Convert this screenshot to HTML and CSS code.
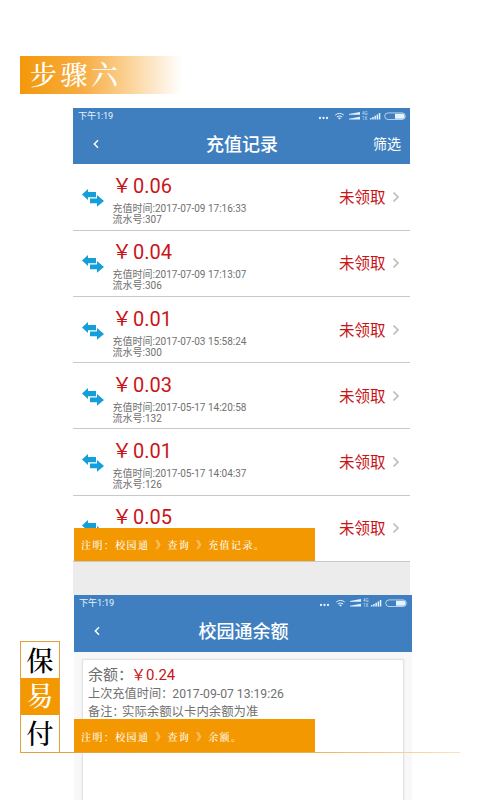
FILE: index.html
```html
<!DOCTYPE html>
<html lang="zh-CN">
<head>
<meta charset="utf-8">
<title>保易付</title>
<link rel="stylesheet" href="styles.css">
</head>
<body>
<svg width="0" height="0" class="defs">
  <symbol id="swap" viewBox="0 0 22 18"><path d="M0 5.500 6 0v3h8v5.200H6V11zM8 9.600h7V6l7 6-7 5.700V14.300H8z"/></symbol>
  <symbol id="right" viewBox="0 0 8 12"><path d="M1.500 1.500 6 6l-4.500 4.500" fill="none" stroke="#bcbcbc" stroke-width="1.700"/></symbol>
  <symbol id="back" viewBox="0 0 8 10"><path d="M6 1.300 2.300 5 6 8.700" fill="none" stroke="#fff" stroke-width="1.400"/></symbol>
  <symbol id="dots" viewBox="0 0 43 12">
    <g fill="#e5f2ff"><circle cx="2" cy="8" r="1.150"/><circle cx="5.500" cy="8" r="1.150"/><circle cx="9" cy="8" r="1.150"/>
    <path d="M31 4.700V3.900l11-2v2.800zM31 9.600V8.800l11-2v2.800z"/><path d="m21.500 9.500-1.500-1.600q1.500-1 3 0z"/></g>
    <path d="M17.300 5q4.200-3.200 8.400 0M18.800 6.900q2.700-2 5.400 0" fill="none" stroke="#e5f2ff"/>
  </symbol>
  <symbol id="power" viewBox="0 0 38 12">
    <path d="M1 9.500V8h1.500v1.500zm2.200 0V7h1.500v2.500zm2.200 0V5.800h1.500v3.700zm2.200 0V4.400h1.500v5.100zm2.200 0V3h1.500v6.500zM26 3.700h7.500q2.200 0 2.200 2.500t-2.200 2.500H26z" fill="#e5f2ff"/>
    <rect x="15.700" y="2.900" width="20.600" height="6.600" rx="3.300" fill="none" stroke="#e5f2ff" stroke-width=".7"/>
  </symbol>
</svg>
<h1 class="step">步骤六</h1>

<section class="phone records">
  <header class="bar">
    <div class="status"><span>下午1:19</span><svg width="43" height="12"><use href="#dots"/></svg><span class="net">4G<br>1X</span><svg width="38" height="12"><use href="#power"/></svg></div>
    <div class="nav"><svg width="8" height="10"><use href="#back"/></svg><b>充值记录</b><span>筛选</span></div>
  </header>
  <div class="list">
    <div class="row"><svg class="swap"><use href="#swap"/></svg><div class="info"><p class="amount"><i>￥</i>0.06</p><p>充值时间:2017-07-09 17:16:33</p><p>流水号:307</p></div><span class="state">未领取</span><svg class="right"><use href="#right"/></svg></div>
    <div class="row"><svg class="swap"><use href="#swap"/></svg><div class="info"><p class="amount"><i>￥</i>0.04</p><p>充值时间:2017-07-09 17:13:07</p><p>流水号:306</p></div><span class="state">未领取</span><svg class="right"><use href="#right"/></svg></div>
    <div class="row"><svg class="swap"><use href="#swap"/></svg><div class="info"><p class="amount"><i>￥</i>0.01</p><p>充值时间:2017-07-03 15:58:24</p><p>流水号:300</p></div><span class="state">未领取</span><svg class="right"><use href="#right"/></svg></div>
    <div class="row"><svg class="swap"><use href="#swap"/></svg><div class="info"><p class="amount"><i>￥</i>0.03</p><p>充值时间:2017-05-17 14:20:58</p><p>流水号:132</p></div><span class="state">未领取</span><svg class="right"><use href="#right"/></svg></div>
    <div class="row"><svg class="swap"><use href="#swap"/></svg><div class="info"><p class="amount"><i>￥</i>0.01</p><p>充值时间:2017-05-17 14:04:37</p><p>流水号:126</p></div><span class="state">未领取</span><svg class="right"><use href="#right"/></svg></div>
    <div class="row"><svg class="swap"><use href="#swap"/></svg><div class="info"><p class="amount"><i>￥</i>0.05</p></div><span class="state">未领取</span><svg class="right"><use href="#right"/></svg></div>
  </div>
  <div class="note"><span>注明：校园通</span><em>》</em><span>查询</span><em>》</em><span>充值记录。</span></div>
</section>

<section class="phone balance">
  <header class="bar">
    <div class="status"><span>下午1:19</span><svg width="43" height="12"><use href="#dots"/></svg><span class="net">4G<br>1X</span><svg width="38" height="12"><use href="#power"/></svg></div>
    <div class="nav"><svg width="8" height="10"><use href="#back"/></svg><b>校园通余额</b><span></span></div>
  </header>
  <div class="card">
    <p class="total">余额：<strong><i>￥</i>0.24</strong></p>
    <p>上次充值时间：<span>2017-09-07 13:19:26</span></p>
    <p>备注：<span class="remark">实际余额以卡内余额为准</span></p>
  </div>
  <div class="note"><span>注明：校园通</span><em>》</em><span>查询</span><em>》</em><span>余额。</span></div>
</section>

<aside class="brand"><span>保</span><span class="fill">易</span><span>付</span></aside>
<div class="rule"></div>
</body>
</html>
```
FILE: styles.css
```css
* { box-sizing: border-box; }
body { margin: 0; width: 480px; height: 800px; overflow: hidden; position: relative; background: #fff; font-family: Roboto, "Noto Sans CJK SC", sans-serif; }
p, h1 { margin: 0; }
i, em { font-style: normal; }
svg { display: block; flex: none; }
.defs { position: absolute; }
.step { margin: 56px 0 0 20px; width: 165px; height: 38px; padding-left: 10px; background: linear-gradient(90deg, #f3980b, #f7ad42 38%, #fbd194 65%, #fff 98%); color: #fff; font: 500 27px/36px "Noto Serif CJK SC", "Noto Sans CJK SC", serif; letter-spacing: 3.5px; }
.phone { position: relative; }
.records { width: 337px; height: 487px; margin: 14px 0 0 73px; background: #ececec; }
.bar { height: 56px; background: #407fbf; color: #fff; }
.status { display: flex; height: 16px; padding: 2px 3px 0 5px; font-size: 9.2px; line-height: 12px; color: #e5f2ff; letter-spacing: -.2px; }
.status span:first-child { margin-right: auto; }
.status .net { width: 8px; padding: 1px 0 0 1px; font-size: 4.5px; line-height: 5px; letter-spacing: 0; color: #c8dff5; }
.nav { display: grid; grid-template-columns: 60px 1fr 60px; align-items: center; height: 40px; text-align: center; }
.nav svg { margin-left: 19px; }
.nav b { padding: 1px 0 0 1px; font-size: 18px; line-height: 24px; font-weight: 500; }
.nav span { font-size: 14px; line-height: 20px; text-align: right; padding-right: 9px; }
.list { padding-top: .6px; background: #fff; }
.row { display: flex; height: 66.2px; border-bottom: 1px solid #c9c9c9; padding-left: 9px; }
.swap { width: 22px; height: 18px; margin-top: 24.6px; fill: #159fda; }
.info { width: 235px; padding: 11.6px 0 0 9px; font-size: 10px; line-height: 11px; color: #707070; white-space: nowrap; }
.info p:not(.amount) { margin-left: -.5px; }
.amount { height: 20px; margin-bottom: 7px; color: #c91518; font-size: 20px; line-height: 20px; }
.amount i { display: inline-block; width: 20px; font-size: 20px; line-height: 20px; text-indent: -1px; }
.state { width: 53px; margin-top: 23.6px; font-size: 15.5px; line-height: 20px; color: #c91518; }
.right { width: 8px; height: 12px; margin-top: 26.6px; }
.note { position: absolute; top: 420px; left: 1px; width: 241px; height: 33px; padding-left: 7px; display: flex; background: #f39800; color: #fff; font: 500 10px/33px "Noto Serif CJK SC", "Noto Sans CJK SC", serif; letter-spacing: 1.4px; white-space: nowrap; }
.note em { width: 18px; padding-left: 6px; }
.balance { width: 338px; height: 205px; margin-left: 74px; background: #f8f8f8; }
.balance .bar { height: 57px; }
.balance .status { padding-right: 4px; }
.balance .nav b { padding-top: 2px; }
.balance .note { top: 124px; left: 0; line-height: 36px; }
.card { width: 322px; height: 150px; margin: 7px 0 0 8px; padding: 4px 0 0 5px; border: 1px solid #e2e2e2; border-radius: 2px; background: #fff; box-shadow: 0 0 2px #ddd; color: #707070; font-size: 12.2px; line-height: 18px; white-space: nowrap; }
.card span { margin-left: -1px; }
.card .remark { margin-left: -2.5px; font-size: 12.4px; }
.total { height: 21px; font-size: 15px; line-height: 22px; }
.total strong { margin-left: -2px; font-weight: 400; color: #c91518; }
.brand { position: absolute; left: 20px; top: 641px; width: 40px; height: 112px; display: grid; grid-template-rows: 36px 37px 37px; border: 1px solid #e6a13e; background: #fff; font: 500 27px/36px "Noto Serif CJK SC", "Noto Sans CJK SC", serif; text-align: center; color: #000; }
.brand .fill { background: #f39800; color: #fff; line-height: 34px; }
.rule { position: absolute; left: 60px; top: 752px; width: 400px; height: 1px; background: linear-gradient(90deg, #e6a13e, #f0ad4d 60%, #fae3bf); }
```
